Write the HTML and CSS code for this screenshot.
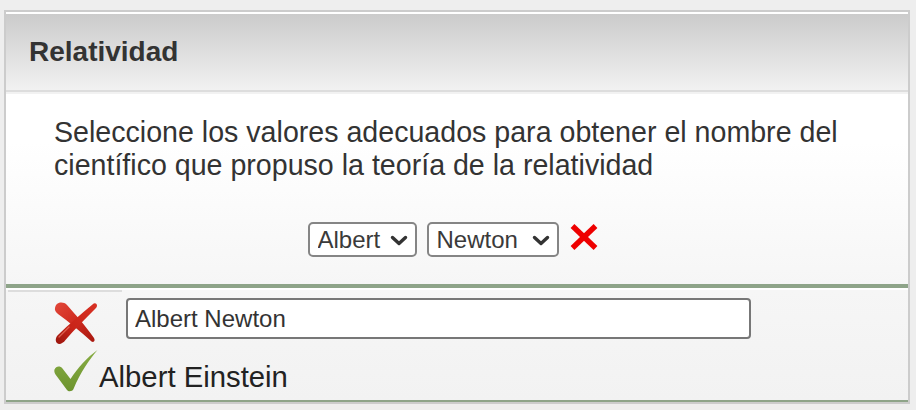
FILE: index.html
```html
<!DOCTYPE html>
<html lang="es">
<head>
<meta charset="utf-8">
<title>Relatividad</title>
<link rel="stylesheet" href="styles.css">
</head>
<body>
<div class="panel">
  <div class="panel-heading">
    <h2 class="panel-title">Relatividad</h2>
  </div>
  <div class="panel-body">
    <div class="question">Seleccione los valores adecuados para obtener el nombre del científico que propuso la teoría de la relatividad</div>
    <div class="answer-row">
      <span class="sel sel-first">
        <select class="sel-input"><option>Albert</option><option>Isaac</option></select>
        <svg class="chev" width="18" height="11" viewBox="0 0 18 11"><polyline points="2.5,2.5 9,8.5 15.5,2.5" fill="none" stroke="#333" stroke-width="3.4" stroke-linecap="round" stroke-linejoin="round"/></svg>
      </span>
      <span class="sel sel-second">
        <select class="sel-input"><option>Newton</option><option>Einstein</option></select>
        <svg class="chev" width="18" height="11" viewBox="0 0 18 11"><polyline points="2.5,2.5 9,8.5 15.5,2.5" fill="none" stroke="#333" stroke-width="3.4" stroke-linecap="round" stroke-linejoin="round"/></svg>
      </span>
      <svg class="wrong-mark" width="30" height="28" viewBox="0 0 30 28">
        <line x1="3.5" y1="3" x2="26.5" y2="25" stroke="#ee0000" stroke-width="5.5"/>
        <line x1="26.5" y1="3" x2="3.5" y2="25" stroke="#ee0000" stroke-width="5.5"/>
      </svg>
    </div>
  </div>
  <div class="feedback">
    <div class="feedback-rule"></div>
    <div class="feedback-row">
      <svg class="icon-x" width="44" height="44" viewBox="0 0 44 44">
        <defs>
          <linearGradient id="rg" x1="0" y1="0" x2="1" y2="1">
            <stop offset="0" stop-color="#e2483a"/>
            <stop offset="0.5" stop-color="#cf2a1f"/>
            <stop offset="1" stop-color="#a8180f"/>
          </linearGradient>
          <linearGradient id="rg2" x1="1" y1="0" x2="0" y2="1">
            <stop offset="0" stop-color="#d83224"/>
            <stop offset="0.6" stop-color="#c92419"/>
            <stop offset="1" stop-color="#9a150d"/>
          </linearGradient>
        </defs>
        <path d="M1,7 C2,1 9,0 13,4 C21,13 31,24 40,37 C41.5,39.5 40,42 37.5,40.5 C27,31 15,21 4,13 C1.5,11 0.5,9 1,7 Z" fill="url(#rg)"/>
        <path d="M42.5,3 C43.5,4.5 43,6 41.5,7.5 C31,18 20,29 11.5,39 C9,42.5 5,44 3,42 C1,40 1.5,36 4.5,33.5 C15,23 27,13 38.5,3.5 C40,2 41.5,2 42.5,3 Z" fill="url(#rg2)"/>
        <path d="M5,36 C8,33 12,29 15,26" fill="none" stroke="#ef7a66" stroke-width="1.2" stroke-linecap="round" opacity="0.7"/>
      </svg>
      <input class="feedback-input" type="text" value="Albert Newton" readonly>
    </div>
    <div class="feedback-row feedback-row-answer">
      <svg class="icon-check" width="44" height="42" viewBox="0 0 44 42">
        <defs>
          <linearGradient id="gg" x1="0" y1="0" x2="0" y2="1">
            <stop offset="0" stop-color="#88ad44"/>
            <stop offset="1" stop-color="#6d942f"/>
          </linearGradient>
        </defs>
        <path d="M0.5,19.5 C2,16 6,15.5 8.5,18.5 L16.5,29 C24,17.5 33,7.5 43.5,0 C36,9 26.5,22 19.5,39 C18.5,41.5 14.5,42 13,40 L1.5,24.5 C0.5,23 0,21 0.5,19.5 Z" fill="url(#gg)"/>
      </svg>
      <span class="correct-answer">Albert Einstein</span>
    </div>
  </div>
</div>
</body>
</html>
```
FILE: styles.css
```css
html, body {
  margin: 0;
  padding: 0;
}
body {
  background: #eeeeee;
  font-family: "Liberation Sans", Arial, Helvetica, sans-serif;
  color: #333333;
}
.panel {
  margin: 10px 0 0 4px;
  width: 902px;
  border: 2px solid #cccccc;
  background: #ffffff;
}
.panel-heading {
  border-top: 2px solid #ffffff;
  border-bottom: 2px solid #dddddd;
  background: linear-gradient(to bottom, #cbcbcb 0%, #f1f1f1 100%);
}
.panel-title {
  margin: 0;
  padding: 22px 24px 22px 23px;
  font-size: 28px;
  line-height: 32px;
  font-weight: bold;
  color: #333333;
}
.panel-body {
  border-top: 2px solid #f2f2f2;
  border-bottom: 4px solid #8ea489;
  padding: 22px 40px 27px 48px;
  background: linear-gradient(to bottom, #ffffff 0%, #ffffff 25%, #f6f6f6 100%);
}
.question {
  font-size: 28.6px;
  line-height: 33px;
  color: #333333;
}
.answer-row {
  margin-top: 40px;
  padding-left: 0;
  padding-right: 16px;
  display: flex;
  justify-content: center;
  align-items: center;
  gap: 10px;
  height: 35px;
}
.sel {
  position: relative;
  display: block;
  height: 35px;
}
.sel-first { width: 109px; }
.sel-second { width: 132px; }
.sel-input {
  -webkit-appearance: none;
  appearance: none;
  box-sizing: border-box;
  width: 100%;
  height: 35px;
  margin: 0;
  padding: 0 0 0 8px;
  border: 2px solid #858585;
  border-radius: 5px;
  background: #ffffff;
  font-family: "Liberation Sans", Arial, Helvetica, sans-serif;
  font-size: 24px;
  color: #3a3a3a;
  outline: none;
}
.chev {
  position: absolute;
  right: 9px;
  top: 13px;
  pointer-events: none;
}
.wrong-mark {
  display: block;
  margin-top: -6px;
}
.feedback {
  border-bottom: 2px solid #8ea489;
  padding: 0 0 6px 0;
  background: linear-gradient(to bottom, #f6f6f6 0%, #f2f2f2 100%);
}
.feedback-rule {
  margin: 2px 0 0 2px;
  width: 114px;
  height: 2px;
  background: #dddddd;
}
.feedback-row {
  display: flex;
  align-items: flex-start;
  padding-left: 48px;
  margin-top: 6px;
}
.icon-x {
  display: block;
  margin-top: 3px;
}
.feedback-input {
  box-sizing: border-box;
  margin: 0 0 0 28px;
  width: 625px;
  height: 41px;
  padding: 0 0 0 7px;
  border: 2px solid #777777;
  border-radius: 4px;
  background: #ffffff;
  font-family: "Liberation Sans", Arial, Helvetica, sans-serif;
  font-size: 24px;
  color: #333333;
  outline: none;
}
.feedback-row-answer {
  align-items: flex-end;
  margin-top: 5px;
}
.icon-check {
  display: block;
  margin-bottom: 2px;
}
.correct-answer {
  margin-left: 1px;
  font-size: 29.3px;
  line-height: 34px;
  color: #222222;
}
```
